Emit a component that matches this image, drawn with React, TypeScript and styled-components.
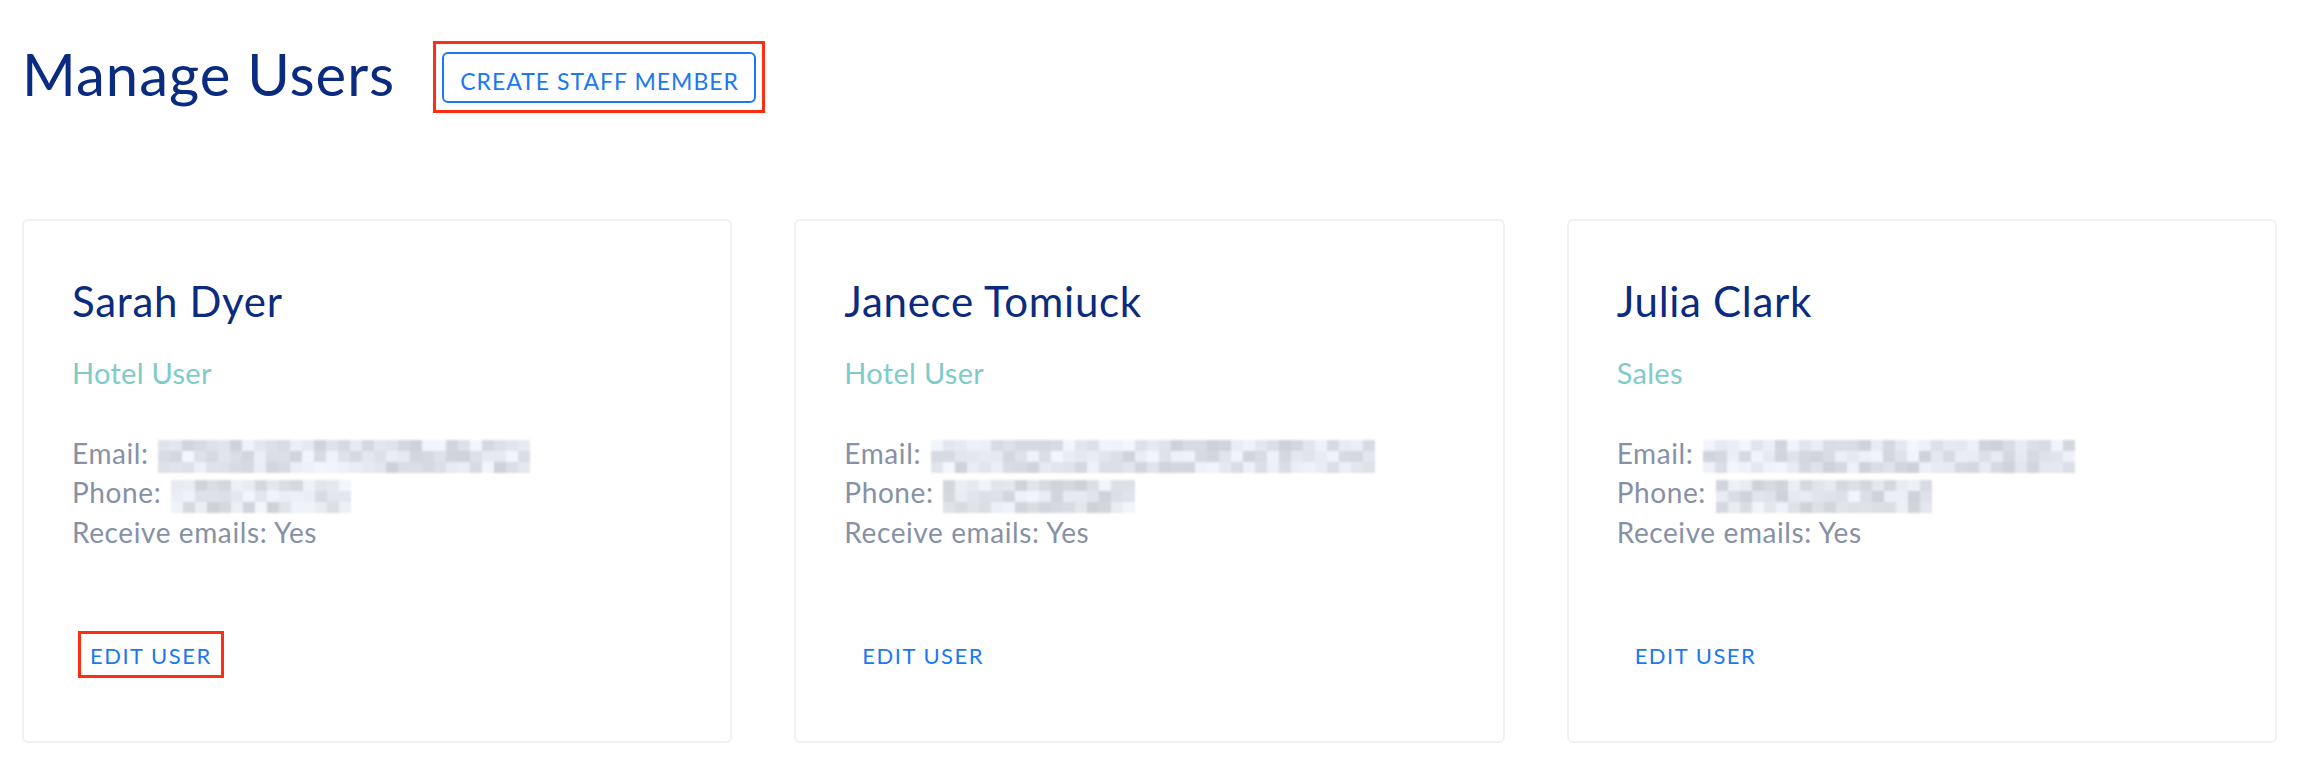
import styled, { createGlobalStyle } from 'styled-components';

const GlobalStyle = createGlobalStyle`
  body {
    margin: 0;
    background: #ffffff;
    font-family: Lato, "Open Sans", sans-serif;
  }
`;

interface User {
  name: string;
  role: string;
  emailCells: number;
  phoneCells: number;
  seed: number;
  highlight?: boolean;
}

const users: User[] = [
  { name: 'Sarah Dyer', role: 'Hotel User', emailCells: 31, phoneCells: 15, seed: 7, highlight: true },
  { name: 'Janece Tomiuck', role: 'Hotel User', emailCells: 37, phoneCells: 16, seed: 19 },
  { name: 'Julia Clark', role: 'Sales', emailCells: 31, phoneCells: 18, seed: 43 },
];

// blurred-out contact values, drawn as a grey mosaic
function shades(count: number, seed: number) {
  let s = seed;
  const out: string[] = [];
  for (let i = 0; i < count; i++) {
    s = (s * 9301 + 49297) % 233280;
    const v = 210 + Math.floor((s / 233280) * 38);
    out.push(`rgb(${v - 3}, ${v - 1}, ${Math.min(255, v + 6)})`);
  }
  return out;
}

function Redacted({ cells, seed }: { cells: number; seed: number }) {
  const colors = shades(cells * 3, seed);
  return (
    <Mosaic $cols={cells}>
      {colors.map((c, i) => (
        <span key={i} style={{ background: c }} />
      ))}
    </Mosaic>
  );
}

function UserCard({ user }: { user: User }) {
  return (
    <Card>
      <Name>{user.name}</Name>
      <Role>{user.role}</Role>
      <Details>
        <DetailLine>
          Email: <Redacted cells={user.emailCells} seed={user.seed} />
        </DetailLine>
        <DetailLine>
          Phone: <Redacted cells={user.phoneCells} seed={user.seed + 5} />
        </DetailLine>
        <DetailLine>Receive emails: Yes</DetailLine>
      </Details>
      <Actions>
        <Highlight $marked={!!user.highlight} $pad="11px 9px 8px 9px">
          <TextButton>EDIT USER</TextButton>
        </Highlight>
      </Actions>
    </Card>
  );
}

export default function App() {
  return (
    <>
      <GlobalStyle />
      <Page>
        <Header>
          <Title>Manage Users</Title>
          <Highlight $marked $pad="8px 6px 7px">
            <OutlineButton>CREATE STAFF MEMBER</OutlineButton>
          </Highlight>
        </Header>
        <CardGrid>
          {users.map((u) => (
            <UserCard key={u.name} user={u} />
          ))}
        </CardGrid>
      </Page>
    </>
  );
}

const Page = styled.div`
  padding: 0 21px 0 22px;
`;

const Header = styled.header`
  display: flex;
  align-items: flex-start;
  gap: 38px;
  padding-top: 41px;
`;

const Title = styled.h1`
  margin: 4px 0 0;
  font-weight: 400;
  font-size: 58px;
  line-height: 1;
  letter-spacing: 1px;
  color: #0b2b80;
`;

const Highlight = styled.span<{ $marked: boolean; $pad: string }>`
  display: inline-flex;
  border: 3px solid ${(p) => (p.$marked ? '#ff2d12' : 'transparent')};
  padding: ${(p) => p.$pad};
`;

const OutlineButton = styled.button`
  font-family: inherit;
  font-size: 23px;
  line-height: 1;
  letter-spacing: 1px;
  color: #1a78f2;
  background: #ffffff;
  border: 2px solid #1a78f2;
  border-radius: 6px;
  padding: 16px 15px 8px 16px;
  cursor: pointer;
`;

const CardGrid = styled.div`
  display: grid;
  grid-template-columns: repeat(3, 1fr);
  gap: 62px;
  margin-top: 106px;
`;

const Card = styled.div`
  display: flex;
  flex-direction: column;
  align-items: flex-start;
  border: 2px solid #f1f1f3;
  border-radius: 6px;
  padding: 59px 48px 63px 48px;
`;

const Name = styled.h2`
  margin: 0;
  font-weight: 400;
  font-size: 42px;
  line-height: 1;
  letter-spacing: 0.7px;
  color: #0b2b80;
`;

const Role = styled.div`
  margin-top: 36px;
  font-size: 29px;
  line-height: 1;
  letter-spacing: 0.3px;
  color: #7ecbca;
`;

const Details = styled.div`
  margin-top: 47px;
`;

const DetailLine = styled.div`
  font-size: 28px;
  line-height: 38px;
  letter-spacing: 0.6px;
  color: #8791a6;
  white-space: nowrap;
`;

const Mosaic = styled.span<{ $cols: number }>`
  display: inline-grid;
  grid-template-columns: repeat(${(p) => p.$cols}, 12px);
  grid-auto-rows: 11px;
  vertical-align: middle;
  margin-left: 2px;
  filter: blur(0.8px);
`;

const Actions = styled.div`
  margin-top: 80px;
  margin-left: 6px;
`;

const TextButton = styled.button`
  font-family: inherit;
  font-size: 22px;
  line-height: 1;
  letter-spacing: 1.5px;
  color: #1a78f2;
  background: none;
  border: none;
  padding: 0;
  cursor: pointer;
`;
